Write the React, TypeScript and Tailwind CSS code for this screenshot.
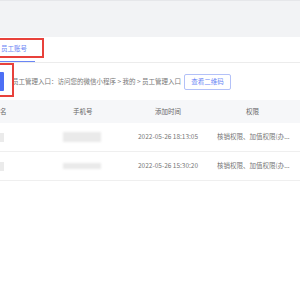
import React from "react";

type StaffRow = {
  phoneBlur: string;
  addedAt: string;
  perms: string;
};

const rows: StaffRow[] = [
  { phoneBlur: "h-[10px]", addedAt: "2022-05-26 18:13:05", perms: "核销权限、加值权限(办..." },
  { phoneBlur: "h-[6px]", addedAt: "2022-05-26 15:30:20", perms: "核销权限、加值权限(办..." },
];

const font = { fontFamily: '"Noto Sans CJK SC", "Noto Sans", sans-serif' };

export default function App() {
  return (
    <div className="relative w-[300px] h-[300px] overflow-hidden bg-white text-[6.5px] text-[#666]" style={font}>
      {/* top gray band */}
      <div className="h-[37px] bg-[#f2f3f5] border-t border-[#e6e7ea]" />

      {/* tabs */}
      <div className="h-[26px] border-b border-[#ececec] flex items-end">
        <div className="w-[35px] h-full flex flex-col">
          <div className="flex-1 flex items-center pl-[1px] text-[#6a86f5]">员工账号</div>
          <div className="h-[1.5px] bg-[#6a86f5]" />
        </div>
      </div>

      {/* entry row */}
      <div className="h-[37px] flex items-center">
        <div className="w-[4px] h-[19px] bg-[#4d6ff5] rounded-r-[1px]" />
        <div className="ml-[8px] flex items-center text-[#777]">
          <span>员工管理入口：访问您的微信小程序 &gt; 我的 &gt; 员工管理入口</span>
          <button className="ml-[3px] w-[47px] h-[16px] border border-[#b3c1f8] rounded-[2px] text-[#6a86f5] flex items-center justify-center">
            查看二维码
          </button>
        </div>
      </div>

      {/* table */}
      <div className="grid grid-cols-[63px_75px_79px_83px] h-[23px] bg-[#f6f7f9] items-center text-[#666]">
        <div>名</div>
        <div className="pl-[10px]">手机号</div>
        <div className="pl-[17px]">添加时间</div>
        <div className="pl-[29px]">权限</div>
      </div>
      {rows.map((r, i) => (
        <div
          key={i}
          className="grid grid-cols-[63px_75px_79px_83px] h-[29px] items-center border-b border-[#efefef] text-[#777]"
        >
          <div className="w-[4px] h-[9px] bg-[#ebebeb] blur-[0.6px]" />
          <div className={`w-[38px] ${r.phoneBlur} bg-[#eaeaea] blur-[0.8px]`} />
          <div>{r.addedAt}</div>
          <div>{r.perms}</div>
        </div>
      ))}

      {/* red highlight boxes */}
      <div className="absolute left-[-3px] top-[38px] w-[47px] h-[20px] border-2 border-[#e8413b]" />
      <div className="absolute left-[-3px] top-[63px] w-[17px] h-[34px] border-2 border-[#e8413b]" />
    </div>
  );
}
